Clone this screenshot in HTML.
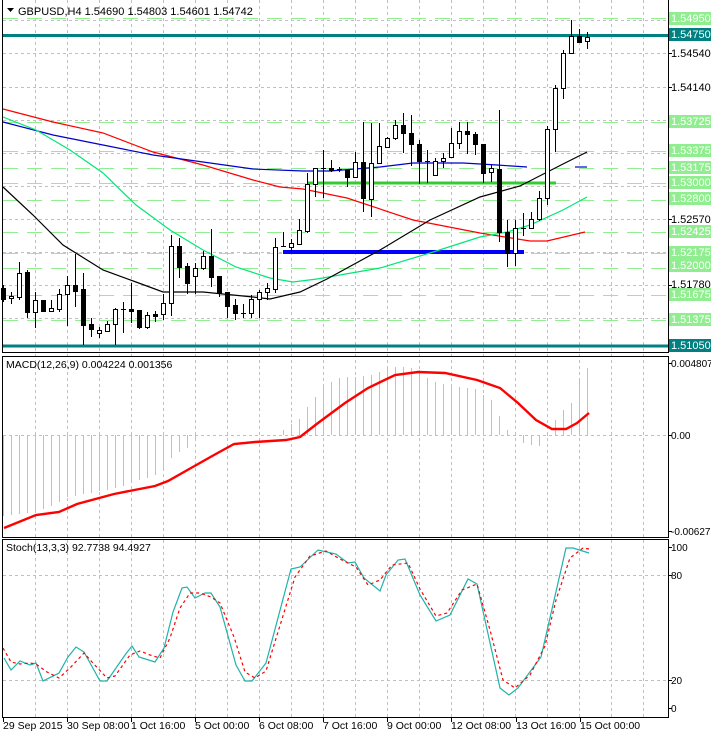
<!DOCTYPE html>
<html><head><meta charset="utf-8"><style>
html,body{margin:0;padding:0;background:#fff;}
svg{display:block;font-family:"Liberation Sans",sans-serif;font-size:11px;}
</style></head><body>
<svg width="711" height="733" viewBox="0 0 711 733" xmlns="http://www.w3.org/2000/svg">
<rect width="711" height="733" fill="#fff"/>
<!-- vertical grid -->
<g stroke="#c0c0c0" stroke-dasharray="3,3" stroke-width="1">
<path d="M35.5 0V717M67.5 0V717M99.5 0V717M131.5 0V717M163.5 0V717M195.5 0V717M227.5 0V717M259.5 0V717M291.5 0V717M323.5 0V717M355.5 0V717M387.5 0V717M419.5 0V717M451.5 0V717M483.5 0V717M515.5 0V717M547.5 0V717M579.5 0V717M611.5 0V717M643.5 0V717"/>
<path d="M3 20.5H668M3 53.5H668M3 87.5H668M3 120.5H668M3 153.5H668M3 186.5H668M3 219.5H668M3 252.5H668M3 285.5H668M3 318.5H668"/>
<path d="M3 435.5H668M3 575.5H668M3 680.5H668"/>
</g>
<!-- level lines -->
<g stroke="#90ee90" stroke-dasharray="15,9" stroke-width="1">
<path d="M3 18.5H668M3 122.5H668M3 151.5H668M3 168.5H668M3 183.5H668M3 200.5H668M3 232.5H668M3 253.5H668M3 268.5H668M3 295.5H668M3 320.5H668"/>
</g>
<g stroke="#008080" stroke-width="3"><path d="M3 35.5H668M3 346H668"/></g>
<!-- support lines -->
<path d="M308 183H556" stroke="#33cc33" stroke-width="3"/>
<path d="M283 252H524" stroke="#0000ff" stroke-width="4"/>
<!-- MAs -->
<g fill="none" stroke-width="1.2">
<polyline stroke="#ff0000" points="3,109 53,122 103,133 153,152 203,165 253,180 280,187 303,189 347,198 413,220 480,233 530,241 547,241 585,232"/>
<polyline stroke="#0000cc" points="3,122 53,135 103,145 153,155 203,162 253,169 303,171 330,171 380,167 413,163 463,163 497,165 527,167"/>
<path d="M575 167H587" stroke="#0000cc"/>
<polyline stroke="#00e676" points="3,117 36,130 70,150 103,173 136,205 170,230 203,250 236,267 270,278 293,282 317,279 380,268 430,253 480,237 507,232 530,225 563,210 587,197"/>
<polyline stroke="#000" points="3,187 33,215 63,245 103,270 136,282 163,292 203,292 253,297 270,299 300,292 327,279 380,250 430,220 480,197 520,186 563,164 587,152"/>
</g>
<!-- candles -->
<g stroke="#000" stroke-width="1" id="c">
<path d="M3.5 285V302M11.5 292V304M19.5 262V300M27.5 270V318M35.5 292V328M43.5 300V311M51.5 300V312M59.5 289V312M67.5 276V326M75.5 254V307M83.5 273V345M91.5 318V337M99.5 327V338M107.5 321V332M115.5 308V345M123.5 302V333M131.5 283V323M139.5 310V329M147.5 312V329M155.5 311V322M163.5 294V320M171.5 235V316M179.5 238V278M187.5 263V294M195.5 263V294M203.5 251V270M211.5 229V287M219.5 276V297M227.5 292V318M235.5 299V320M243.5 304V318M251.5 295V318M259.5 290V318M267.5 283V300M275.5 238V293M283.5 232V247M291.5 239V252M299.5 219V245M307.5 173V233M315.5 168V197M323.5 150V198M331.5 160V172M339.5 167V172M347.5 170V187M355.5 152V178M363.5 122V212M371.5 123V217M379.5 123V164M387.5 137V148M395.5 120V140M403.5 113V153M411.5 115V166M419.5 140V184M427.5 150V183M435.5 158V176M443.5 153V168M451.5 128V158M459.5 122V149M467.5 122V154M475.5 132V155M483.5 144V183M491.5 165V182M499.5 110V242M507.5 220V267M515.5 220V266M523.5 213V236M531.5 212V229M539.5 191V221M547.5 126V205M555.5 85V152M563.5 50V99M571.5 20V53M579.5 29V43M587.5 32V49"/>
<path d="M121 309.5H126M241 313.5H246M281 246.5H286M321 168.5H326M337 169.5H342M425 161.5H430M521 228.5H526"/>
</g>
<g stroke="#000" stroke-width="1" fill="#000">
<rect x="1.5" y="288.5" width="4" height="11"/><rect x="25.5" y="272.5" width="4" height="40"/><rect x="41.5" y="300.5" width="4" height="11"/><rect x="73.5" y="285.5" width="4" height="6"/><rect x="81.5" y="289.5" width="4" height="36"/><rect x="89.5" y="324.5" width="4" height="5"/><rect x="129.5" y="309.5" width="4" height="2"/><rect x="137.5" y="310.5" width="4" height="17"/><rect x="153.5" y="314.5" width="4" height="2"/><rect x="177.5" y="246.5" width="4" height="21"/><rect x="185.5" y="266.5" width="4" height="17"/><rect x="209.5" y="256.5" width="4" height="21"/><rect x="217.5" y="276.5" width="4" height="17"/><rect x="225.5" y="292.5" width="4" height="14"/><rect x="233.5" y="305.5" width="4" height="8"/><rect x="329.5" y="168.5" width="4" height="2"/><rect x="345.5" y="170.5" width="4" height="7"/><rect x="361.5" y="162.5" width="4" height="36"/><rect x="401.5" y="125.5" width="4" height="8"/><rect x="409.5" y="133.5" width="4" height="11"/><rect x="417.5" y="144.5" width="4" height="17"/><rect x="465.5" y="131.5" width="4" height="3"/><rect x="473.5" y="134.5" width="4" height="10"/><rect x="481.5" y="144.5" width="4" height="29"/><rect x="497.5" y="169.5" width="4" height="63"/><rect x="505.5" y="232.5" width="4" height="21"/><rect x="577.5" y="36.5" width="4" height="6"/>
</g>
<g stroke="#000" stroke-width="1" fill="#fff">
<rect x="9.5" y="296.5" width="4" height="2"/><rect x="17.5" y="273.5" width="4" height="24"/><rect x="33.5" y="300.5" width="4" height="12"/><rect x="49.5" y="308.5" width="4" height="3"/><rect x="57.5" y="294.5" width="4" height="15"/><rect x="65.5" y="285.5" width="4" height="9"/><rect x="97.5" y="330.5" width="4" height="3"/><rect x="105.5" y="324.5" width="4" height="7"/><rect x="113.5" y="309.5" width="4" height="15"/><rect x="145.5" y="315.5" width="4" height="12"/><rect x="161.5" y="303.5" width="4" height="11"/><rect x="169.5" y="246.5" width="4" height="57"/><rect x="193.5" y="268.5" width="4" height="8"/><rect x="201.5" y="256.5" width="4" height="12"/><rect x="249.5" y="299.5" width="4" height="14"/><rect x="257.5" y="292.5" width="4" height="7"/><rect x="265.5" y="288.5" width="4" height="4"/><rect x="273.5" y="247.5" width="4" height="42"/><rect x="289.5" y="243.5" width="4" height="4"/><rect x="297.5" y="230.5" width="4" height="14"/><rect x="305.5" y="184.5" width="4" height="47"/><rect x="313.5" y="168.5" width="4" height="16"/><rect x="353.5" y="162.5" width="4" height="15"/><rect x="369.5" y="163.5" width="4" height="36"/><rect x="377.5" y="146.5" width="4" height="17"/><rect x="385.5" y="138.5" width="4" height="9"/><rect x="393.5" y="125.5" width="4" height="13"/><rect x="433.5" y="161.5" width="4" height="14"/><rect x="441.5" y="158.5" width="4" height="3"/><rect x="449.5" y="143.5" width="4" height="14"/><rect x="457.5" y="131.5" width="4" height="12"/><rect x="489.5" y="168.5" width="4" height="4"/><rect x="513.5" y="228.5" width="4" height="25"/><rect x="529.5" y="219.5" width="4" height="9"/><rect x="537.5" y="198.5" width="4" height="21"/><rect x="545.5" y="129.5" width="4" height="69"/><rect x="553.5" y="88.5" width="4" height="41"/><rect x="561.5" y="53.5" width="4" height="35"/><rect x="569.5" y="36.5" width="4" height="17"/><rect x="585.5" y="37.5" width="4" height="4"/>
</g>
<!-- MACD histogram -->
<g stroke="#c0c0c0" stroke-width="1">
<path d="M3.5 435V516M11.5 435V515M19.5 435V514M27.5 435V513M35.5 435V511M43.5 435V509M51.5 435V506M59.5 435V502M67.5 435V497M75.5 435V496M83.5 435V494M91.5 435V493M99.5 435V491M107.5 435V490M115.5 435V488M123.5 435V486M131.5 435V483M139.5 435V480M147.5 435V478M155.5 435V475M163.5 435V468M171.5 435V458M179.5 435V452M187.5 435V448M195.5 435V440M203.5 435V436"/>
<path d="M283.5 435V430M291.5 435V424M299.5 435V419M307.5 435V407M315.5 435V397M323.5 435V387M331.5 435V382M339.5 435V378M347.5 435V377M355.5 435V377M363.5 435V376M371.5 435V375M379.5 435V372M387.5 435V368M395.5 435V367M403.5 435V367M411.5 435V368M419.5 435V370M427.5 435V378M435.5 435V382M443.5 435V384M451.5 435V386M459.5 435V387M467.5 435V388M475.5 435V389M483.5 435V395M491.5 435V400M499.5 435V416M507.5 435V430M523.5 435V443M531.5 435V445M539.5 435V446M547.5 435V436M555.5 435V420M563.5 435V410M571.5 435V403M579.5 435V380M587.5 435V368"/>
</g>
<polyline fill="none" stroke="#ff0000" stroke-width="2.4" points="4,528 36,515 59,512 77,504 114,494 155,486 168,481 191,468 214,455 234,444 255,442 286,440 300,437 318,423 345,403 368,388 395,375 418,372 445,373 477,380 500,388 518,403 536,420 552,429 566,429 577,423 589,413"/>
<!-- Stoch -->
<polyline fill="none" stroke="#20b2aa" stroke-width="1.2" points="4,658 11,670 20,661 30,665 36,663 43,681 59,673 68,657 76,647 84,652 100,681 107,681 125,655 132,646 139,657 155,662 164,648 173,612 182,588 187,587 195,598 205,593 211,593 220,607 236,665 245,681 252,681 266,663 291,569 300,567 318,550 336,554 348,563 355,562 364,578 380,591 386,575 398,560 405,559 420,595 436,621 450,615 468,579 477,584 500,688 509,695 518,688 541,657 566,548 573,548 589,553"/>
<polyline fill="none" stroke="#ff0000" stroke-width="1.2" stroke-dasharray="3,3" points="3,648 11,662 20,664 30,663 36,664 47,672 59,678 70,668 84,653 92,662 107,678 115,676 130,655 140,651 150,655 160,658 170,638 180,608 190,593 200,593 211,597 220,603 234,637 245,672 255,678 266,671 278,632 295,577 310,556 326,551 340,559 356,567 368,585 380,580 392,565 408,563 420,589 436,616 447,613 462,590 477,584 490,630 503,680 515,688 530,675 545,646 556,600 570,558 583,548 589,549"/>
<!-- borders -->
<g stroke="#000" stroke-width="1" fill="none">
<path d="M2.5 0V352.5H668.5V0"/>
<rect x="2.5" y="356.5" width="666" height="181"/>
<rect x="2.5" y="539.5" width="666" height="178"/>
<path d="M3.5 718V722M67.5 718V722M131.5 718V722M195.5 718V722M259.5 718V722M323.5 718V722M387.5 718V722M451.5 718V722M516.5 718V722M580.5 718V722"/>
<path d="M668 53.5H672M668 87.5H672M668 219.5H672M668 285.5H672M668 363.5H672M668 435.5H672M668 531.5H672M668 547.5H672M668 575.5H672M668 680.5H672M668 708.5H672"/>
</g>
<!-- header -->
<path d="M7 8H14L10.5 12Z" fill="#000"/>
<text x="18" y="15" fill="#000">GBPUSD,H4  1.54690 1.54803 1.54601 1.54742</text>
<text x="6" y="368" fill="#000" font-size="10.5">MACD(12,26,9) 0.004224 0.001356</text>
<text x="6" y="551" fill="#000" font-size="10.5">Stoch(13,3,3) 92.7738 94.4927</text>
<!-- right labels -->
<g fill="#90ee90">
<rect x="669" y="12" width="42" height="13"/><rect x="669" y="115" width="42" height="13"/><rect x="669" y="144" width="42" height="13"/><rect x="669" y="161" width="42" height="13"/><rect x="669" y="176" width="42" height="13"/><rect x="669" y="192" width="42" height="13"/><rect x="669" y="225" width="42" height="13"/><rect x="669" y="246" width="42" height="13"/><rect x="669" y="259" width="42" height="13"/><rect x="669" y="288" width="42" height="13"/><rect x="669" y="313" width="42" height="13"/>
</g>
<g fill="#008080"><rect x="669" y="28" width="42" height="13"/><rect x="669" y="339" width="42" height="13"/></g>
<g fill="#fff">
<text x="671" y="22">1.54950</text><text x="671" y="38">1.54750</text><text x="671" y="125">1.53725</text><text x="671" y="154">1.53375</text><text x="671" y="171">1.53175</text><text x="671" y="186">1.53000</text><text x="671" y="202">1.52800</text><text x="671" y="235">1.52425</text><text x="671" y="256">1.52175</text><text x="671" y="269">1.52000</text><text x="671" y="298">1.51675</text><text x="671" y="323">1.51375</text><text x="671" y="349">1.51050</text>
</g>
<g fill="#000">
<text x="671" y="57">1.54540</text><text x="671" y="91">1.54140</text><text x="671" y="223">1.52570</text><text x="671" y="288">1.51780</text>
<text x="671" y="367" font-size="10">0.004807</text><text x="671" y="439" font-size="10">0.00</text><text x="671" y="535" font-size="10">-0.006278</text>
<text x="671" y="551" font-size="10">100</text><text x="671" y="579" font-size="10">80</text><text x="671" y="684" font-size="10">20</text><text x="671" y="712" font-size="10">0</text>
</g>
<g fill="#000" font-size="10.5">
<text x="3" y="729">29 Sep 2015</text><text x="67" y="729">30 Sep 08:00</text><text x="131" y="729">1 Oct 16:00</text><text x="195" y="729">5 Oct 00:00</text><text x="259" y="729">6 Oct 08:00</text><text x="323" y="729">7 Oct 16:00</text><text x="387" y="729">9 Oct 00:00</text><text x="451" y="729">12 Oct 08:00</text><text x="516" y="729">13 Oct 16:00</text><text x="580" y="729">15 Oct 00:00</text>
</g>
</svg>
</body></html>
